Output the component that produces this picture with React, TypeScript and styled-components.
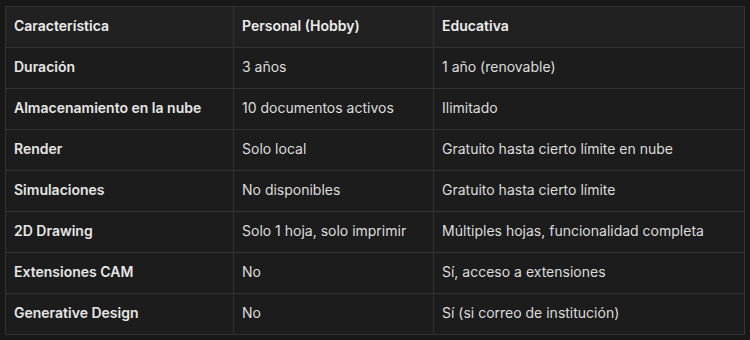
import { createGlobalStyle, styled } from "styled-components";

const GlobalStyle = createGlobalStyle`
  html, body {
    margin: 0;
    background: #181818;
  }
  body {
    padding: 6px 5px;
    font-family: Inter, "Liberation Sans", Arial, sans-serif;
  }
`;

const Table = styled.table`
  width: 740px;
  border-collapse: collapse;
  background: #1c1c1c;
  font-size: 14px;
  color: #dcdcdc;
  border: 1px solid #333;
`;

const HeadRow = styled.tr`
  background: #212121;
`;

const Cell = styled.td<{ $width?: number }>`
  height: 36px;
  padding: 0 8px 4px;
  border: 1px solid #333;
  vertical-align: middle;
  text-align: left;
  white-space: nowrap;
  width: ${(p) => (p.$width ? `${p.$width}px` : "auto")};
`;

const HeadCell = styled(Cell).attrs({ as: "th" })`
  font-weight: 600;
  color: #ececec;
`;

const LabelCell = styled(Cell)`
  font-weight: 600;
  color: #e6e6e6;
`;

const rows: [string, string, string][] = [
  ["Duración", "3 años", "1 año (renovable)"],
  ["Almacenamiento en la nube", "10 documentos activos", "Ilimitado"],
  ["Render", "Solo local", "Gratuito hasta cierto límite en nube"],
  ["Simulaciones", "No disponibles", "Gratuito hasta cierto límite"],
  ["2D Drawing", "Solo 1 hoja, solo imprimir", "Múltiples hojas, funcionalidad completa"],
  ["Extensiones CAM", "No", "Sí, acceso a extensiones"],
  ["Generative Design", "No", "Sí (si correo de institución)"],
];

export default function App() {
  return (
    <>
      <GlobalStyle />
      <Table>
        <thead>
          <HeadRow>
            <HeadCell $width={211}>Característica</HeadCell>
            <HeadCell $width={183}>Personal (Hobby)</HeadCell>
            <HeadCell>Educativa</HeadCell>
          </HeadRow>
        </thead>
        <tbody>
          {rows.map(([feature, personal, edu]) => (
            <tr key={feature}>
              <LabelCell>{feature}</LabelCell>
              <Cell>{personal}</Cell>
              <Cell>{edu}</Cell>
            </tr>
          ))}
        </tbody>
      </Table>
    </>
  );
}
